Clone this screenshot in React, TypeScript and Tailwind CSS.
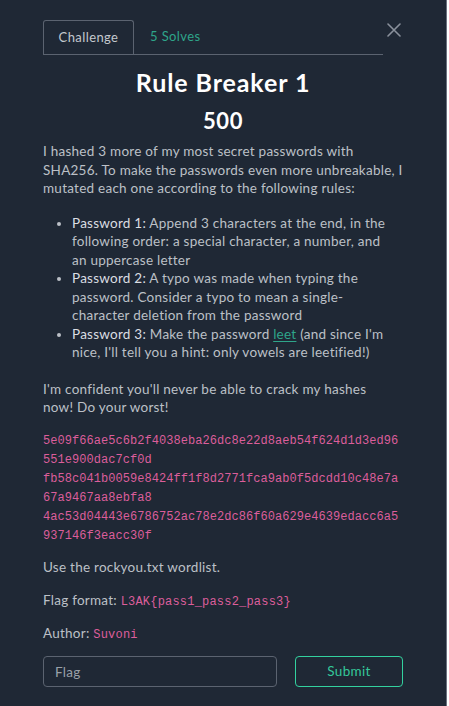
import React, { useState } from 'react';

const hashes = [
  '5e09f66ae5c6b2f4038eba26dc8e22d8aeb54f624d1d3ed96551e900dac7cf0d',
  'fb58c041b0059e8424ff1f8d2771fca9ab0f5dcdd10c48e7a67a9467aa8ebfa8',
  '4ac53d04443e6786752ac78e2dc86f60a629e4639edacc6a5937146f3eacc30f',
];

const CloseIcon = () => (
  <svg width="14" height="14" viewBox="0 0 14 14" className="block">
    <path d="M1 1L13 13M13 1L1 13" stroke="#8a919c" strokeWidth="1.6" strokeLinecap="round" />
  </svg>
);

const Label = ({ children }: { children: React.ReactNode }) => (
  <span className="text-[#dadde2]">{children}</span>
);

export default function App() {
  const [flag, setFlag] = useState('');

  return (
    <div className="w-[447px] min-h-[706px] bg-[#1f2835] border-r border-[#6b7280] font-['Lato',sans-serif] text-[#bcc0c7]">
      <div className="px-[43px] pt-[20px] pb-[18px]">
        <div className="flex items-start">
          <div className="flex w-[340px] border-b border-[#5b6370]">
            <div className="h-[34px] w-[91px] flex items-center justify-center border border-b-0 border-[#5b6370] rounded-t-[3px] text-[13px] tracking-[0.4px] text-[#c4c8ce]">
              Challenge
            </div>
            <div className="h-[34px] px-[16px] flex items-center text-[13px] tracking-[0.4px] text-[#2ea58a]">5 Solves</div>
          </div>
          <button className="ml-[4px] mt-[3px] p-0 bg-transparent">
            <CloseIcon />
          </button>
        </div>

        <h1 className="mt-[12px] text-center text-[25px] leading-[30px] font-bold text-white tracking-[0.9px]">Rule Breaker 1</h1>
        <div className="mt-[11px] text-center text-[22px] leading-[26px] font-bold text-white tracking-[0.6px]">500</div>

        <div className="mt-[8px] w-[380px] text-[13.5px] leading-[18.5px] tracking-[0.25px]">
          <p>
            I hashed 3 more of my most secret passwords with
            <br />
            SHA256. To make the passwords even more unbreakable, I
            <br />
            mutated each one according to the following rules:
          </p>
          <ul className="mt-[16px] pl-[29px] list-disc marker:text-[#bcc0c7]">
            <li>
              <Label>Password 1:</Label> Append 3 characters at the end, in the
              <br />
              following order: a special character, a number, and
              <br />
              an uppercase letter
            </li>
            <li>
              <Label>Password 2:</Label> A typo was made when typing the
              <br />
              password. Consider a typo to mean a single-
              <br />
              character deletion from the password
            </li>
            <li>
              <Label>Password 3:</Label> Make the password{' '}
              <a className="text-[#2ea58a] underline underline-offset-2">leet</a> (and since I'm
              <br />
              nice, I'll tell you a hint: only vowels are leetified!)
            </li>
          </ul>
          <p className="mt-[18px]">
            I'm confident you'll never be able to crack my hashes
            <br />
            now! Do your worst!
          </p>

          <div className="mt-[15px] w-[357px] font-['Liberation_Mono',monospace] text-[12px] leading-[19px] tracking-[0.05px] text-[#dc5e9b] break-all">
            {hashes.map(h => (
              <div key={h}>{h}</div>
            ))}
          </div>

          <p className="mt-[12px]">Use the rockyou.txt wordlist.</p>
          <p className="mt-[15px]">
            Flag format:{' '}
            <code className="font-['Liberation_Mono',monospace] text-[12px] leading-[18px] tracking-[0.2px] text-[#dc5e9b]">L3AK{'{pass1_pass2_pass3}'}</code>
          </p>
          <p className="mt-[13px]">
            Author: <code className="font-['Liberation_Mono',monospace] text-[12px] leading-[18px] tracking-[0.2px] text-[#dc5e9b]">Suvoni</code>
          </p>
        </div>

        <div className="mt-[12px] flex items-center">
          <input
            value={flag}
            onChange={e => setFlag(e.target.value)}
            placeholder="Flag"
            className="w-[234px] h-[31px] px-[11px] bg-transparent border border-[#5b6370] rounded-[4px] text-[13.5px] tracking-[0.3px] text-[#c4c8ce] placeholder:text-[#9aa0a8] outline-none"
          />
          <button className="ml-[18px] w-[108px] h-[31px] border border-[#33d19f] rounded-[4px] bg-transparent text-[13.5px] tracking-[0.3px] text-[#34c79a]">
            Submit
          </button>
        </div>
      </div>
    </div>
  );
}
